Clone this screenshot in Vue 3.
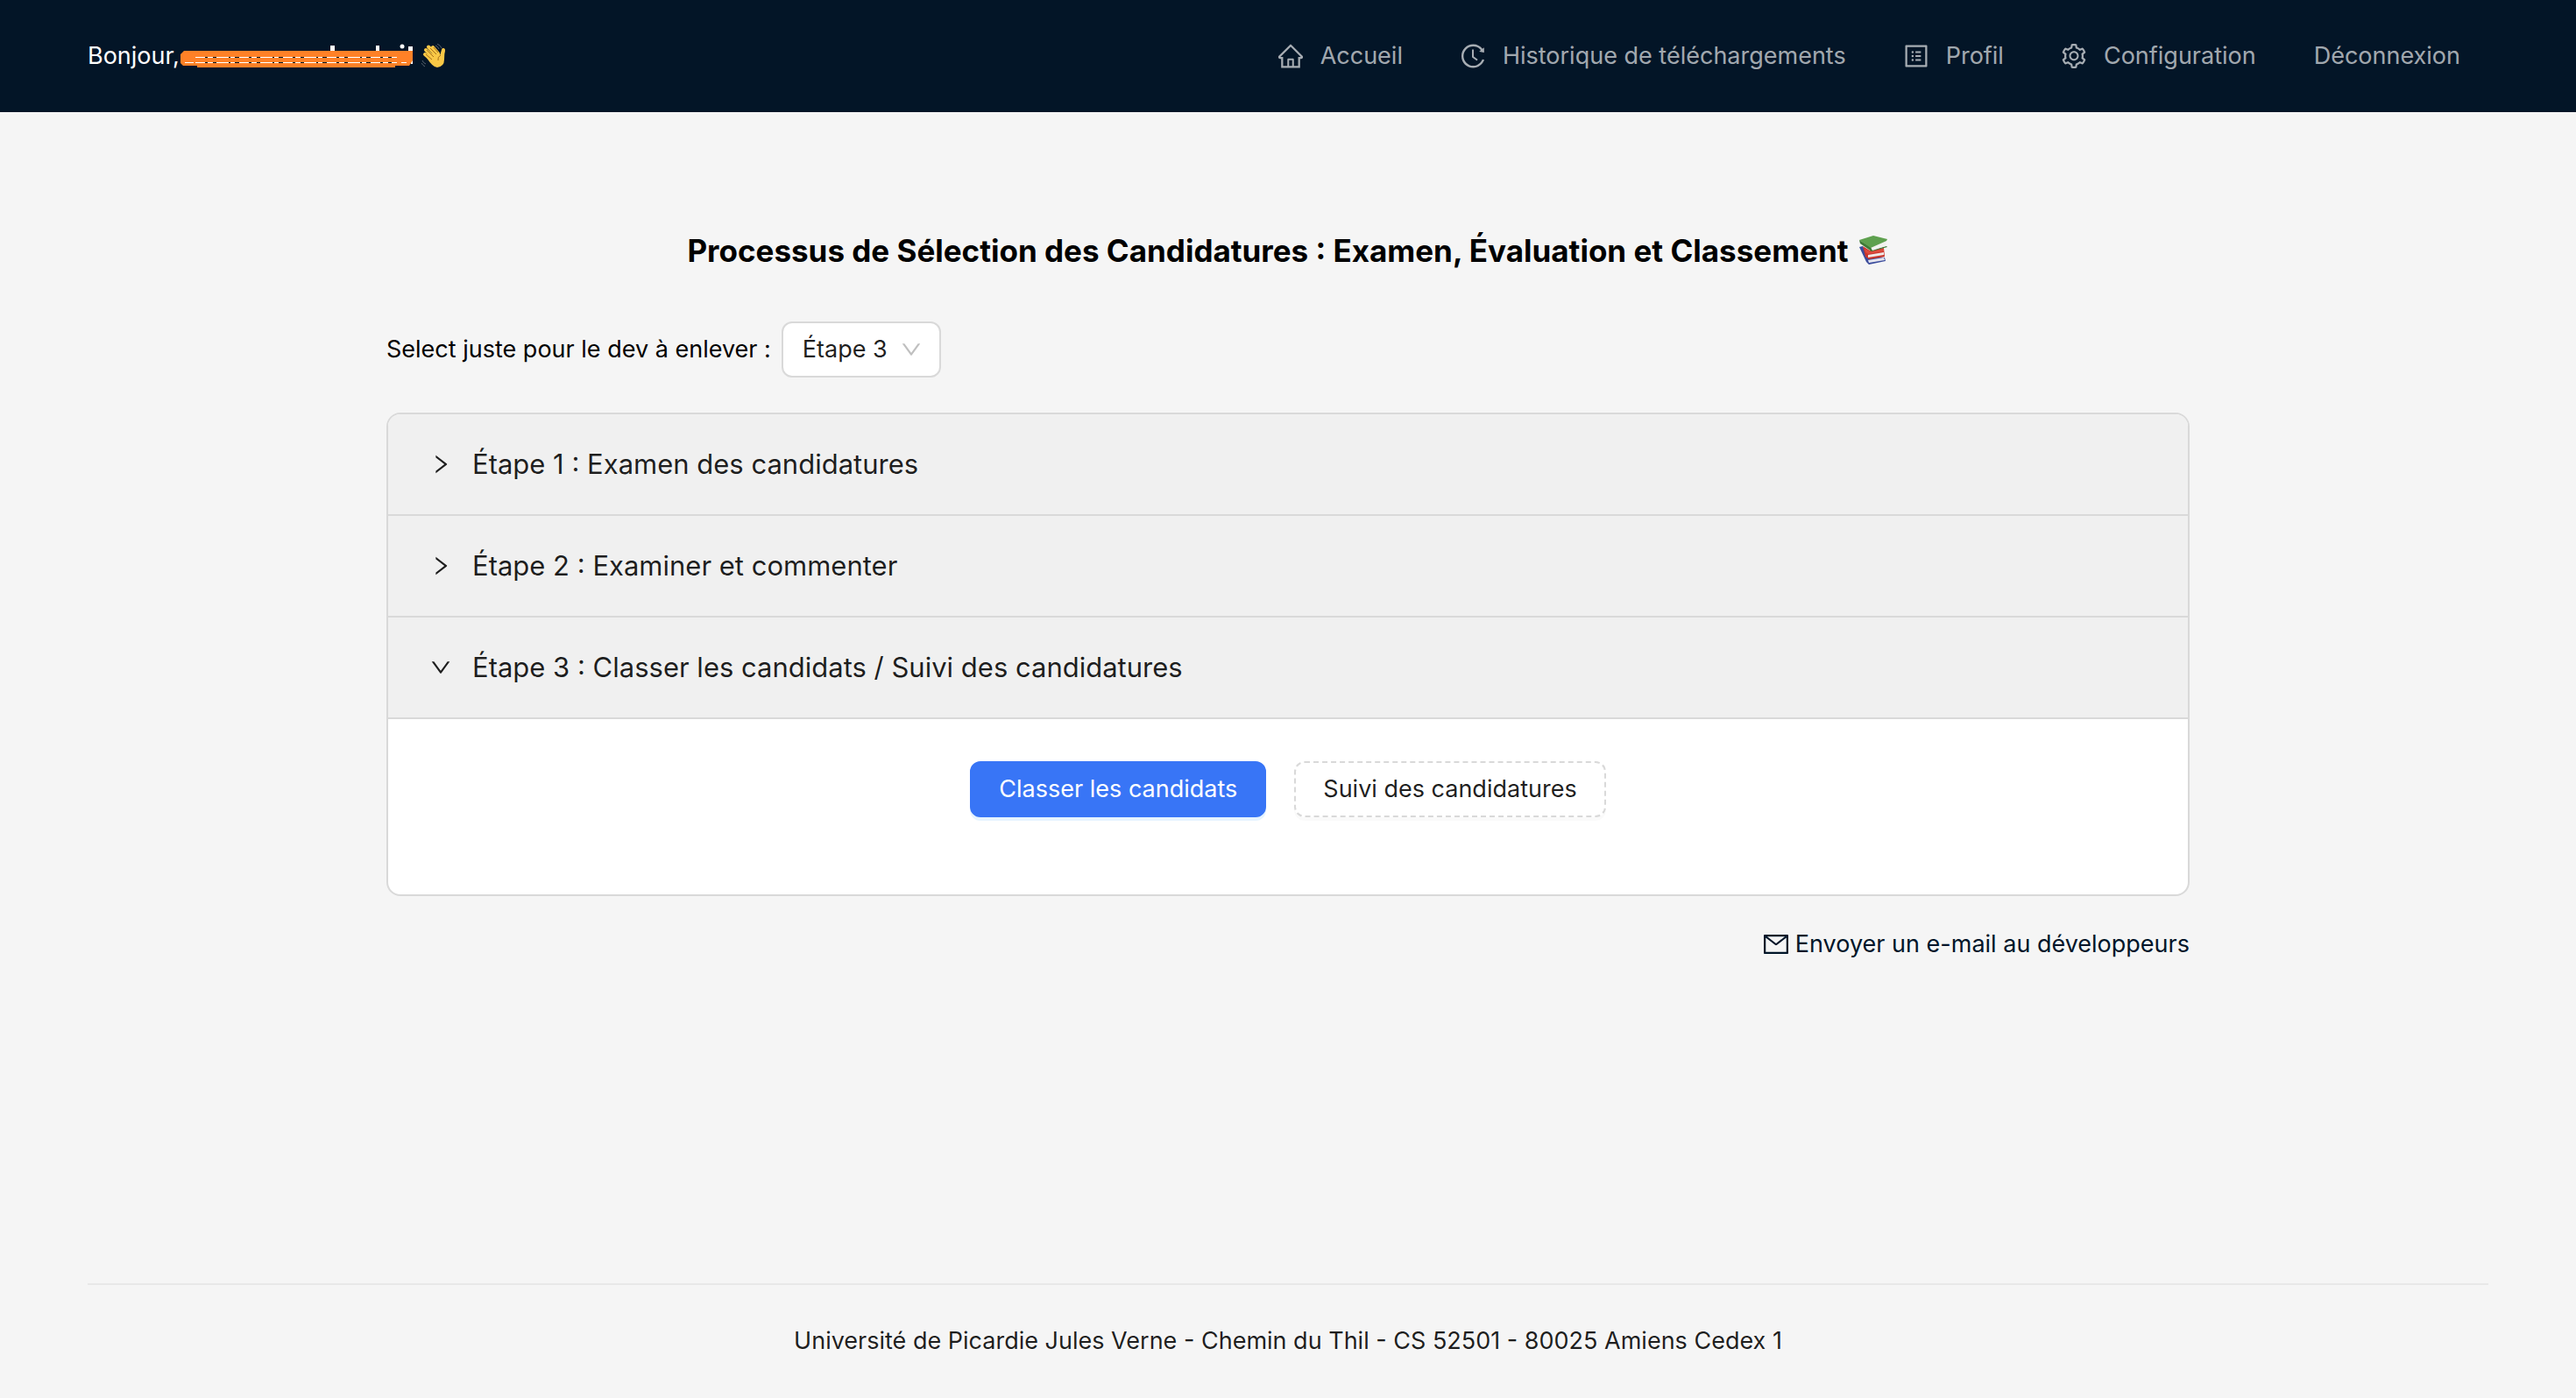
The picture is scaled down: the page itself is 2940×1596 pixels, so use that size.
<script setup>
import { ref } from 'vue'

const icons = {
  home: 'M946.5 505L560.1 118.8l-25.9-25.9a31.5 31.5 0 00-44.4 0L77.5 505a63.9 63.9 0 00-18.8 46c.4 35.2 29.7 63.3 64.9 63.3h42.5V940h691.8V614.3h43.4c17.1 0 33.2-6.7 45.3-18.8a63.6 63.6 0 0018.7-45.3c0-17-6.7-33.1-18.8-45.2zM568 868H456V664h112v204zm217.9-325.7V868H632V640c0-22.1-17.9-40-40-40H432c-22.1 0-40 17.9-40 40v228H238.1V542.3h-96l370-369.7 23.1 23.1L882 542.3h-96.1z',
  history: 'M536.1 273H488c-4.4 0-8 3.6-8 8v275.3c0 2.6 1.2 5 3.3 6.5l165.3 120.7c3.6 2.6 8.6 1.9 11.2-1.7l28.6-39c2.7-3.7 1.9-8.7-1.7-11.2L544.1 528.5V281c0-4.4-3.6-8-8-8zm219.8 75.2l156.8 38.3c5 1.2 9.9-2.6 9.9-7.7l.8-161.5c0-6.7-7.7-10.5-12.9-6.3L752.9 334.1a8 8 0 003 14.1zm167.7 301.1l-56.7-19.5a8 8 0 00-10.1 4.8c-1.9 5.1-3.9 10.1-6 15.1-17.8 42.1-43.3 80-75.9 112.5a353 353 0 01-112.5 75.9 352.18 352.18 0 01-137.7 27.8c-47.8 0-94.1-9.3-137.7-27.8a353 353 0 01-112.5-75.9c-32.5-32.5-58-70.4-75.9-112.5A353.44 353.44 0 01171 512c0-47.8 9.3-94.2 27.8-137.8 17.8-42.1 43.3-80 75.9-112.5a353 353 0 01112.5-75.9C430.6 167.3 477 158 524.8 158s94.1 9.3 137.7 27.8A353 353 0 01775 261.7c10.2 10.3 19.8 21 28.6 32.3l59.8-46.8C784.7 146.6 662.2 81.9 524.6 82 285 82.1 92.6 276.7 95 516.4 97.4 751.9 288.9 942 524.8 942c185.5 0 343.5-117.6 403.7-282.3 1.5-4.2-.7-8.9-4.9-10.4z',
  profile: 'M880 112H144c-17.7 0-32 14.3-32 32v736c0 17.7 14.3 32 32 32h736c17.7 0 32-14.3 32-32V144c0-17.7-14.3-32-32-32zm-40 728H184V184h656v656zM492 400h184c4.4 0 8-3.6 8-8v-48c0-4.4-3.6-8-8-8H492c-4.4 0-8 3.6-8 8v48c0 4.4 3.6 8 8 8zm0 144h184c4.4 0 8-3.6 8-8v-48c0-4.4-3.6-8-8-8H492c-4.4 0-8 3.6-8 8v48c0 4.4 3.6 8 8 8zm0 144h184c4.4 0 8-3.6 8-8v-48c0-4.4-3.6-8-8-8H492c-4.4 0-8 3.6-8 8v48c0 4.4 3.6 8 8 8zM340 368a40 40 0 1080 0 40 40 0 10-80 0zm0 144a40 40 0 1080 0 40 40 0 10-80 0zm0 144a40 40 0 1080 0 40 40 0 10-80 0z',
  setting: 'M924.8 625.7l-65.5-56c3.1-19 4.7-38.4 4.7-57.8s-1.6-38.8-4.7-57.8l65.5-56a32.03 32.03 0 009.3-35.2l-.9-2.6a443.74 443.74 0 00-79.7-137.9l-1.8-2.1a32.12 32.12 0 00-35.1-9.5l-81.3 28.9c-30-24.6-63.5-44-99.7-57.6l-15.7-85a32.05 32.05 0 00-25.8-25.7l-2.7-.5c-52.1-9.4-106.9-9.4-159 0l-2.7.5a32.05 32.05 0 00-25.8 25.7l-15.8 85.4a351.86 351.86 0 00-99 57.4l-81.9-29.1a32 32 0 00-35.1 9.5l-1.8 2.1a446.02 446.02 0 00-79.7 137.9l-.9 2.6c-4.5 12.5-.8 26.5 9.3 35.2l66.3 56.6c-3.1 18.8-4.6 38-4.6 57.1 0 19.2 1.5 38.4 4.6 57.1L99 625.5a32.03 32.03 0 00-9.3 35.2l.9 2.6c18.1 50.4 44.9 96.9 79.7 137.9l1.8 2.1a32.12 32.12 0 0035.1 9.5l81.9-29.1c29.8 24.5 63.1 43.9 99 57.4l15.8 85.4a32.05 32.05 0 0025.8 25.7l2.7.5a449.4 449.4 0 00159 0l2.7-.5a32.05 32.05 0 0025.8-25.7l15.7-85a350 350 0 0099.7-57.6l81.3 28.9a32 32 0 0035.1-9.5l1.8-2.1c34.8-41.1 61.6-87.5 79.7-137.9l.9-2.6c4.5-12.3.8-26.3-9.3-35zM788.3 465.9c2.5 15.1 3.8 30.6 3.8 46.1s-1.3 31-3.8 46.1l-6.6 40.1 74.7 63.9a370.03 370.03 0 01-42.6 73.6L721 702.8l-31.4 25.8c-23.9 19.6-50.5 35-79.3 45.8l-38.1 14.3-17.9 97a377.5 377.5 0 01-85 0l-17.9-97.2-37.8-14.5c-28.5-10.8-55-26.2-78.7-45.7l-31.4-25.9-93.4 33.2c-17-22.9-31.2-47.6-42.6-73.6l75.5-64.5-6.5-40c-2.4-14.9-3.7-30.3-3.7-45.5 0-15.3 1.2-30.6 3.7-45.5l6.5-40-75.5-64.5c11.3-26.1 25.6-50.7 42.6-73.6l93.4 33.2 31.4-25.9c23.7-19.5 50.2-34.9 78.7-45.7l37.9-14.3 17.9-97.2c28.1-3.2 56.8-3.2 85 0l17.9 97 38.1 14.3c28.7 10.8 55.4 26.2 79.3 45.8l31.4 25.8 92.8-32.9c17 22.9 31.2 47.6 42.6 73.6L781.8 426l6.5 39.9zM512 326c-97.2 0-176 78.8-176 176s78.8 176 176 176 176-78.8 176-176-78.8-176-176-176zm79.2 255.2A111.6 111.6 0 01512 614c-29.9 0-58-11.7-79.2-32.8A111.6 111.6 0 01400 502c0-29.9 11.7-58 32.8-79.2C454 401.6 482.1 390 512 390c29.9 0 58 11.6 79.2 32.8A111.6 111.6 0 01624 502c0 29.9-11.7 58-32.8 79.2z',
  right: 'M765.7 486.8L314.9 134.7A7.97 7.97 0 00302 141v77.3c0 4.9 2.3 9.6 6.1 12.6l360 281.1-360 281.1c-3.9 3-6.1 7.7-6.1 12.6V883c0 6.7 7.7 10.4 12.9 6.3l450.8-352.1a31.96 31.96 0 000-50.4z',
  down: 'M884 256h-75c-5.1 0-9.9 2.5-12.9 6.6L512 654.2 227.9 262.6c-3-4.1-7.8-6.6-12.9-6.6h-75c-6.5 0-10.3 7.4-6.5 12.7l352.6 486.1c12.8 17.6 39 17.6 51.7 0l352.6-486.1c3.9-5.3.1-12.7-6.4-12.7z',
  mail: 'M928 160H96c-17.7 0-32 14.3-32 32v640c0 17.7 14.3 32 32 32h832c17.7 0 32-14.3 32-32V192c0-17.7-14.3-32-32-32zm-40 110.8V792H136V270.8l-27.6-21.5 39.3-50.5 42.8 33.3h643.1l42.8-33.3 39.3 50.5-27.7 21.5zM833.6 232L512 482 190.4 232l-42.8-33.3-39.3 50.5 27.6 21.5 341.6 265.6a55.99 55.99 0 0068.7 0L888 270.8l27.6-21.5-39.3-50.5-42.7 33.2z',
}

const links = [
  { label: 'Accueil', icon: icons.home },
  { label: 'Historique de téléchargements', icon: icons.history },
  { label: 'Profil', icon: icons.profile },
  { label: 'Configuration', icon: icons.setting },
  { label: 'Déconnexion' },
]

const steps = [
  { id: 1, title: 'Étape 1 : Examen des candidatures' },
  { id: 2, title: 'Étape 2 : Examiner et commenter' },
  { id: 3, title: 'Étape 3 : Classer les candidats / Suivi des candidatures' },
]

const current = ref(3)
</script>

<template>
  <div class="layout">
    <header class="topbar">
      <div class="greeting">
        <span>Bonjour,</span>
        <svg class="mask" viewBox="0 0 268 30" aria-hidden="true">
          <path fill="#fff" d="M172 3h5v7h-5zM224 3h4v7h-4zM261 4h5v7h-5zM264 20h2v4h-2z" />
          <circle cx="254" cy="4" r="2.5" fill="#fff" />
          <path fill="#ff8127" d="M5 9H266V20L262 26H246V28H20V26H4L1 23V13Z" />
          <path stroke="#031527" stroke-width="1" d="M18 16.500H248M6 22.500H16M18 22.500H248" />
          <path stroke="#fff" stroke-width="1" stroke-dasharray="11 3 6 4 14 2 5 5" d="M18 16.500H248M6 22.500H16M18 22.500H248M253 22.500H259" />
        </svg>
        <svg class="wave" viewBox="0 0 28 28" aria-hidden="true">
          <path fill="none" stroke="#f9c846" stroke-width="4" stroke-linecap="round" d="M14 16L5 7M17 13L8 3.500M19 11L13 4M11 18L4 12M23 14L25 7" />
          <path fill="#f9c846" d="M6 16L17 8L22 13L24 7L27 7Q26 12 26 18Q26 26 18 27Q13 27 6 16Z" />
          <path fill="none" stroke="#a8701a" stroke-width="1" d="M6 7L14 15M10 5L17 12M5 12L12 18M14 4L19 10M22 13Q18 15 19 19" />
          <path fill="none" stroke="#56616d" stroke-width="1" d="M16 2Q19 3 20 6M18 0Q22 2 23 5M1 19Q2 22 5 23M0 22Q2 25 4 26" />
        </svg>
      </div>
      <nav class="menu">
        <a v-for="link in links" :key="link.label" href="#" class="menu-item">
          <svg v-if="link.icon" class="icon" viewBox="64 64 896 896" aria-hidden="true"><path :d="link.icon" /></svg>
          <span>{{ link.label }}</span>
        </a>
      </nav>
    </header>

    <main class="content">
      <h1 class="title">
        <span>Processus de Sélection des Candidatures : Examen, Évaluation et Classement</span>
        <svg class="books" viewBox="0 0 34 34" aria-hidden="true">
          <path fill="#3b4c9c" d="M0 13L4 12L8 22L29 25L30 29L11 33L8 30Z" />
          <path fill="#e4e4ee" d="M10 28L28 25L29 28L11 31Z" />
          <path fill="#c9362b" d="M4 12L12 17L28 14L29 24L11 27L7 24Z" />
          <path fill="#f0e8e6" d="M10 22L28 19L28 22L10 25Z" />
          <path fill="#dd4a3c" d="M6 15L13 18L28 15L28 18L10 21L7 19Z" />
          <path fill="#3d7a36" d="M0 5L1 9L14 18L32 13L31 12L15 16L13 13Z" />
          <path fill="#f1f1ee" d="M13 13L31 6L30 12L15 17Z" />
          <path fill="#5ea04e" d="M0 5L16 0L32 4L31 6L13 14Z" />
        </svg>
      </h1>

      <div class="picker">
        <label for="step">Select juste pour le dev à enlever :</label>
        <div class="select-box">
          <select id="step" v-model="current">
            <option v-for="s in steps" :key="s.id" :value="s.id">Étape {{ s.id }}</option>
          </select>
          <svg class="caret" viewBox="64 64 896 896" aria-hidden="true"><path :d="icons.down" /></svg>
        </div>
      </div>

      <div class="collapse">
        <section v-for="s in steps" :key="s.id" class="step">
          <button type="button" class="step-head" :aria-expanded="s.id === current" @click="current = s.id">
            <svg class="chevron" viewBox="64 64 896 896" aria-hidden="true">
              <path :d="s.id === current ? icons.down : icons.right" />
            </svg>
            <span>{{ s.title }}</span>
          </button>
          <div v-if="s.id === current" class="step-body">
            <button type="button" class="btn primary">Classer les candidats</button>
            <button type="button" class="btn dashed">Suivi des candidatures</button>
          </div>
        </section>
      </div>

      <a href="#" class="mail">
        <svg class="icon" viewBox="64 64 896 896" aria-hidden="true"><path :d="icons.mail" /></svg>
        <span>Envoyer un e-mail au développeurs</span>
      </a>
    </main>

    <footer class="footer">Université de Picardie Jules Verne - Chemin du Thil - CS 52501 - 80025 Amiens Cedex 1</footer>
  </div>
</template>

<style>
body {
  background: #f5f5f5;
}
</style>

<style scoped>
.layout {
  display: flex;
  flex-direction: column;
  min-height: 100vh;
  font-family: Inter, "Liberation Sans", sans-serif;
  font-size: 27px;
  line-height: 44px;
  color: #000;
}

svg {
  display: block;
  flex: none;
}

.icon {
  width: 28px;
  height: 28px;
  fill: currentColor;
}

.topbar {
  display: flex;
  align-items: center;
  justify-content: space-between;
  height: 128px;
  padding: 0 100px;
  background: #031527;
  color: #fff;
}

.greeting {
  display: flex;
  align-items: center;
}

.mask {
  width: 268px;
  height: 30px;
}

.wave {
  width: 28px;
  height: 28px;
  margin-left: 8px;
}

.menu {
  display: flex;
  gap: 2px;
}

.menu-item {
  display: flex;
  align-items: center;
  gap: 20px;
  padding: 0 32px;
  color: rgba(255, 255, 255, 0.65);
  text-decoration: none;
}

.content {
  flex: 1;
  width: 70%;
  margin: 0 auto;
}

.title {
  display: flex;
  align-items: center;
  justify-content: center;
  gap: 12px;
  margin: 130px 0 53px;
  font-size: 35px;
  font-weight: 700;
  line-height: 56px;
}

.books {
  width: 34px;
  height: 34px;
}

.picker {
  display: flex;
  align-items: center;
  gap: 12px;
  margin-bottom: 40px;
}

.select-box {
  position: relative;
  display: flex;
}

.select-box select {
  width: 182px;
  height: 64px;
  padding: 0 22px;
  border: 2px solid #d9d9d9;
  border-radius: 12px;
  appearance: none;
  background: #fff;
  color: rgba(0, 0, 0, 0.88);
  font: inherit;
}

.caret {
  position: absolute;
  top: 20px;
  right: 22px;
  width: 24px;
  height: 24px;
  fill: rgba(0, 0, 0, 0.25);
  pointer-events: none;
}

.collapse {
  overflow: hidden;
  border: 2px solid #d9d9d9;
  border-radius: 16px;
  background: #fff;
}

.step + .step {
  border-top: 2px solid #d9d9d9;
}

.step-head {
  display: flex;
  align-items: center;
  gap: 24px;
  width: 100%;
  padding: 32px 48px;
  border: 0;
  background: #f0f0f0;
  color: rgba(0, 0, 0, 0.88);
  font: inherit;
  font-size: 31px;
  line-height: 50px;
  text-align: left;
}

.chevron {
  width: 24px;
  height: 24px;
  fill: currentColor;
}

.step-body {
  display: flex;
  justify-content: center;
  gap: 32px;
  padding: 48px 32px 88px;
  border-top: 2px solid #d9d9d9;
}

.btn {
  height: 64px;
  padding: 0 31px;
  border: 2px solid;
  border-radius: 12px;
  font: inherit;
}

.primary {
  border-color: #3875f6;
  background: #3875f6;
  box-shadow: 0 4px 0 rgba(5, 145, 255, 0.1);
  color: #fff;
}

.dashed {
  border-color: #d9d9d9;
  border-style: dashed;
  background: #fff;
  box-shadow: 0 4px 0 rgba(0, 0, 0, 0.02);
  color: rgba(0, 0, 0, 0.88);
}

.mail {
  display: flex;
  align-items: center;
  justify-content: flex-end;
  gap: 8px;
  margin-top: 33px;
  color: #001529;
  text-decoration: none;
}

.footer {
  margin: 0 100px;
  padding: 42px 0 43px;
  border-top: 2px solid #e8e8e8;
  color: rgba(0, 0, 0, 0.88);
  text-align: center;
}
</style>
